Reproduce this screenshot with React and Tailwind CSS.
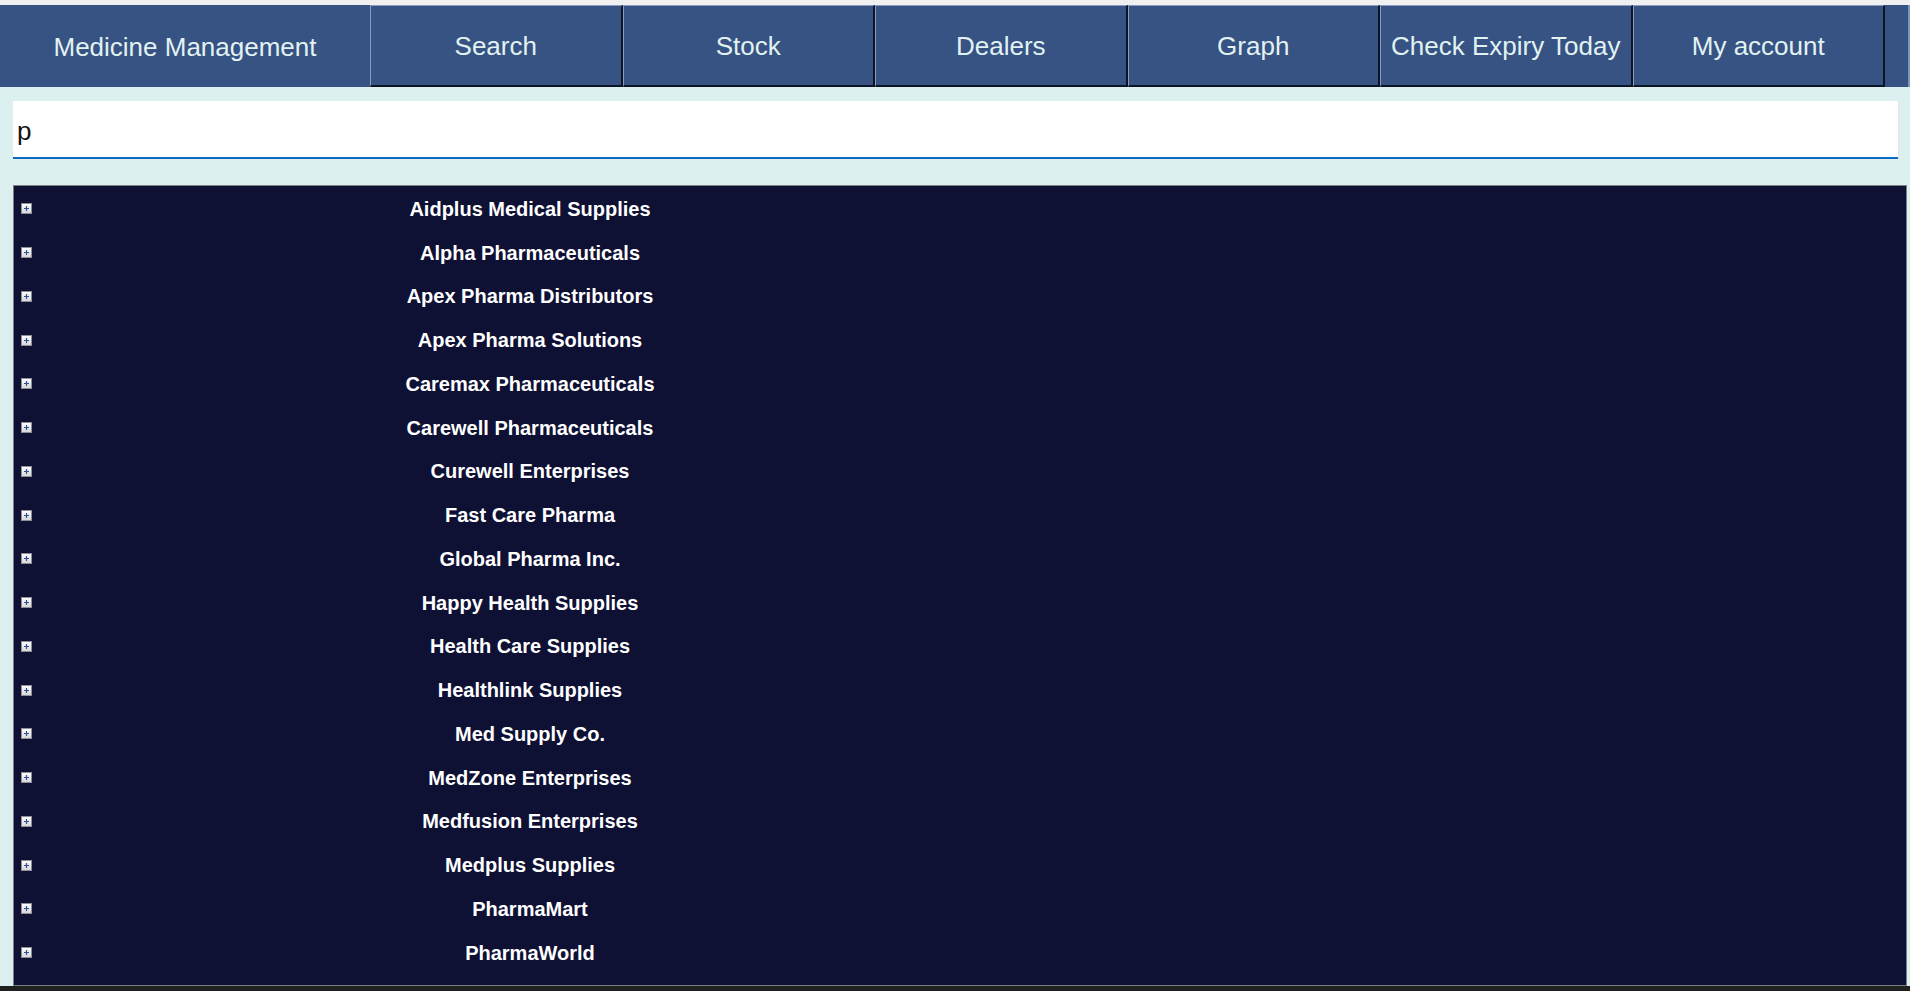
import React from "react";

const tabs = ["Search", "Stock", "Dealers", "Graph", "Check Expiry Today", "My account"];
const dealers = [
  "Aidplus Medical Supplies",
  "Alpha Pharmaceuticals",
  "Apex Pharma Distributors",
  "Apex Pharma Solutions",
  "Caremax Pharmaceuticals",
  "Carewell Pharmaceuticals",
  "Curewell Enterprises",
  "Fast Care Pharma",
  "Global Pharma Inc.",
  "Happy Health Supplies",
  "Health Care Supplies",
  "Healthlink Supplies",
  "Med Supply Co.",
  "MedZone Enterprises",
  "Medfusion Enterprises",
  "Medplus Supplies",
  "PharmaMart",
  "PharmaWorld",
];

function PlusBox() {
  return (
    <svg width="11" height="11" viewBox="0 0 11 11" className="shrink-0">
      <defs>
        <linearGradient id="pg" x1="0" y1="0" x2="0" y2="1">
          <stop offset="0" stopColor="#ffffff" />
          <stop offset="1" stopColor="#d6d6d6" />
        </linearGradient>
      </defs>
      <rect x="0.5" y="0.5" width="10" height="10" fill="url(#pg)" stroke="#8e8f94" />
      <path d="M3 5.5h5M5.5 3v5" stroke="#2e4f99" strokeWidth="1.2" />
    </svg>
  );
}

export default function App() {
  return (
    <div
      className="h-[991px] w-full flex flex-col bg-[#dcf0ef] overflow-hidden"
      style={{ fontFamily: '"Liberation Sans", Arial, sans-serif' }}
    >
      <div className="h-[5px] bg-[#f0f0f0] shrink-0" />
      <div className="h-[82px] flex bg-[#365383] shrink-0">
        <div className="w-[370px] flex items-center justify-center text-[26px] text-[#e2f2f2] pt-[2px]">
          Medicine Management
        </div>
        {tabs.map((t) => (
          <div
            key={t}
            className="w-[252.5px] flex items-center justify-center text-[26px] text-[#e2f2f2] pt-[2px] border-l border-t border-[#8a9dc0] border-r-2 border-b-2 border-r-[#0d1424] border-b-[#0d1424] whitespace-nowrap"
          >
            {t}
          </div>
        ))}
        <div className="flex-1 border-r-2 border-[#7d95b8]" />
      </div>
      <div className="flex-1 flex flex-col pl-[13px] pr-[3px]">
        <div className="mt-[14px] h-[58px] flex mr-[7px]">
          <div className="flex-1 bg-white border-b-2 border-[#0a67c2] flex items-center pl-[4px] text-[26px] text-[#111] pt-[4px]">
            p
          </div>
          <div className="w-[2px] bg-[#e6e8e8]" />
        </div>
        <div className="mt-[26px] h-[801px] bg-[#0e1034] border border-[#7c7e86] flex flex-col">
          {dealers.map((d) => (
            <div key={d} className="h-[43.75px] flex items-center shrink-0 pt-[2px]">
              <div className="ml-[7px]">
                <PlusBox />
              </div>
              <div className="w-[996px] text-center text-white font-bold text-[20px] whitespace-nowrap">
                {d}
              </div>
            </div>
          ))}
        </div>
      </div>
      <div className="h-[5px] bg-[#202020] shrink-0" />
    </div>
  );
}
